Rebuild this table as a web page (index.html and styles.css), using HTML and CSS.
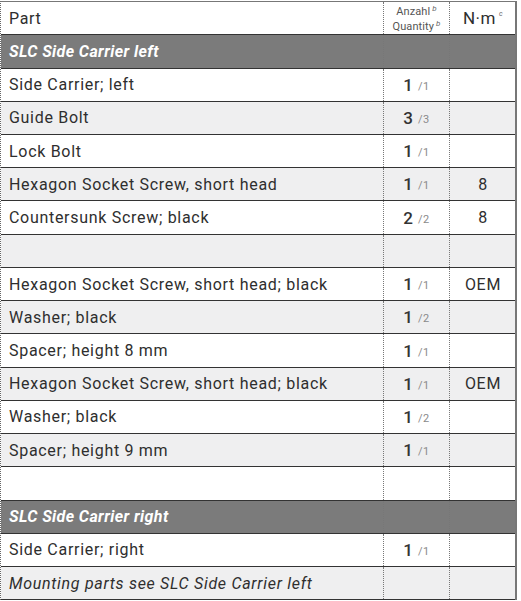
FILE: index.html
```html
<!DOCTYPE html>
<html>
<head>
<meta charset="utf-8">
<link rel="stylesheet" href="styles.css">
</head>
<body>
<div class="parts">
  <div class="row head">
    <div class="c name">Part</div>
    <div class="c qty qhead"><span>Anzahl<i>b</i></span><span>Quantity<i>b</i></span></div>
    <div class="c nm nmhead">N·m<i>c</i></div>
  </div>
  <div class="row section"><div class="c name">SLC Side Carrier left</div><div class="c qty"></div><div class="c nm"></div></div>
  <div class="row"><div class="c name">Side Carrier; left</div><div class="c qty"><b>1</b><small>/1</small></div><div class="c nm"></div></div>
  <div class="row alt"><div class="c name">Guide Bolt</div><div class="c qty"><b>3</b><small>/3</small></div><div class="c nm"></div></div>
  <div class="row"><div class="c name">Lock Bolt</div><div class="c qty"><b>1</b><small>/1</small></div><div class="c nm"></div></div>
  <div class="row alt"><div class="c name">Hexagon Socket Screw, short head</div><div class="c qty"><b>1</b><small>/1</small></div><div class="c nm">8</div></div>
  <div class="row"><div class="c name">Countersunk Screw; black</div><div class="c qty"><b>2</b><small>/2</small></div><div class="c nm">8</div></div>
  <div class="row alt"><div class="c name"></div><div class="c qty"></div><div class="c nm"></div></div>
  <div class="row"><div class="c name">Hexagon Socket Screw, short head; black</div><div class="c qty"><b>1</b><small>/1</small></div><div class="c nm">OEM</div></div>
  <div class="row alt"><div class="c name">Washer; black</div><div class="c qty"><b>1</b><small>/2</small></div><div class="c nm"></div></div>
  <div class="row"><div class="c name">Spacer; height 8 mm</div><div class="c qty"><b>1</b><small>/1</small></div><div class="c nm"></div></div>
  <div class="row alt"><div class="c name">Hexagon Socket Screw, short head; black</div><div class="c qty"><b>1</b><small>/1</small></div><div class="c nm">OEM</div></div>
  <div class="row"><div class="c name">Washer; black</div><div class="c qty"><b>1</b><small>/2</small></div><div class="c nm"></div></div>
  <div class="row alt"><div class="c name">Spacer; height 9 mm</div><div class="c qty"><b>1</b><small>/1</small></div><div class="c nm"></div></div>
  <div class="row"><div class="c name"></div><div class="c qty"></div><div class="c nm"></div></div>
  <div class="row section"><div class="c name">SLC Side Carrier right</div><div class="c qty"></div><div class="c nm"></div></div>
  <div class="row"><div class="c name">Side Carrier; right</div><div class="c qty"><b>1</b><small>/1</small></div><div class="c nm"></div></div>
  <div class="row alt"><div class="c name note">Mounting parts see SLC Side Carrier left</div><div class="c qty"></div><div class="c nm"></div></div>
</div>
</body>
</html>
```
FILE: styles.css
```css
html, body {
  margin: 0;
  padding: 0;
  background: #ffffff;
}
body {
  font-family: Roboto, "Liberation Sans", sans-serif;
  color: #2e2e2e;
}
.parts {
  margin-top: 1px;
  width: 517px;
  box-sizing: border-box;
  border-top: 1px solid #777;
  border-left: 1px dotted #666;
  border-right: 2px solid #777;
}
.row {
  display: grid;
  grid-template-columns: 382px 66px 67px;
  height: 33.24px;
  box-sizing: border-box;
  border-bottom: 1px solid #333;
  background: #ffffff;
}
.row.head {
  height: 33.3px;
}
.row.alt {
  background: #efeff0;
}
.row.section {
  background: #7b7b7b;
  color: #ffffff;
}
.c {
  display: flex;
  align-items: center;
  font-size: 16px;
  letter-spacing: 0.7px;
  white-space: nowrap;
  overflow: hidden;
}
.name {
  padding-left: 8px;
}
.section .name {
  font-weight: 700;
  font-style: italic;
  letter-spacing: 0.4px;
}
.note {
  font-style: italic;
}
.qty, .nm {
  justify-content: center;
  border-left: 1px dotted #777;
}
.qty b {
  font-size: 17px;
  font-weight: 500;
  color: #333;
  letter-spacing: 0;
}
.qty small {
  font-size: 11px;
  color: #8a8a8a;
  margin-left: 5px;
  margin-top: 3px;
  letter-spacing: 0.5px;
}
.qhead {
  flex-direction: column;
  font-size: 11px;
  line-height: 12px;
  color: #555;
  letter-spacing: 0.1px;
}
.qhead i {
  font-size: 8px;
  vertical-align: 4px;
  margin-left: 2px;
  color: #666;
}
.nmhead {
  font-size: 17px;
  letter-spacing: 0.5px;
}
.nmhead i {
  align-self: flex-start;
  margin-top: 8px;
  margin-left: 3px;
  font-size: 7px;
  color: #666;
}
```
